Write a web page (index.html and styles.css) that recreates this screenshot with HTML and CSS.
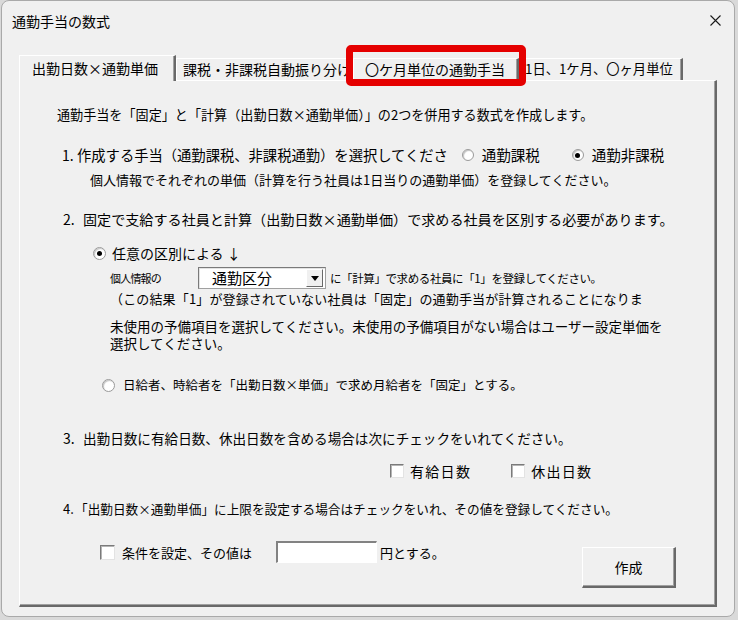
FILE: index.html
```html
<!DOCTYPE html>
<html lang="ja">
<head>
<meta charset="utf-8">
<title>通勤手当の数式</title>
<link rel="stylesheet" href="styles.css">
</head>
<body>
<div class="window">
  <div class="titlebar">
    <span class="title">通勤手当の数式</span>
    <svg class="close" width="11" height="11" viewBox="0 0 11 11"><path d="M0.5 0.5L10.5 10.5M10.5 0.5L0.5 10.5" stroke="#1a1a1a" stroke-width="1.1" fill="none"/></svg>
  </div>
  <div class="tabs-wrap">
    <div class="tabs">
      <div class="tab tab-active t1">出勤日数×通勤単価</div>
      <div class="tab t2">課税・非課税自動振り分け</div>
      <div class="tab t3">〇ケ月単位の通勤手当</div>
      <div class="tab t4">1日、1ケ月、〇ヶ月単位</div>
    </div>
    <div class="panel">
      <div class="row r1">通勤手当を「固定」と「計算（出勤日数×通勤単価）」の2つを併用する数式を作成します。</div>
      <div class="row r2">
        <span class="num n1">1.</span><span class="q1">作成する手当（通勤課税、非課税通勤）を選択してくださ</span>
        <span class="opt o1"><span class="radio"></span><span class="optlbl">通勤課税</span></span>
        <span class="opt o2"><span class="radio on"></span><span class="optlbl">通勤非課税</span></span>
      </div>
      <div class="row r3">個人情報でそれぞれの単価（計算を行う社員は1日当りの通勤単価）を登録してください。</div>
      <div class="row r4"><span class="num n2">2.</span><span class="q2">固定で支給する社員と計算（出勤日数×通勤単価）で求める社員を区別する必要があります。</span></div>
      <div class="row r5"><span class="radio big on"></span><span class="l5">任意の区別による ↓</span></div>
      <div class="row r6">
        <span class="small">個人情報の</span>
        <span class="combo"><span class="combo-text">通勤区分</span><span class="combo-btn"><span class="tri"></span></span></span>
        <span class="after">に「計算」で求める社員に「1」を登録してください。</span>
      </div>
      <div class="row r7">（この結果「1」が登録されていない社員は「固定」の通勤手当が計算されることになりま</div>
      <div class="r89">未使用の予備項目を選択してください。未使用の予備項目がない場合はユーザー設定単価を<br>選択してください。</div>
      <div class="row r10"><span class="radio big"></span><span class="l10">日給者、時給者を「出勤日数×単価」で求め月給者を「固定」とする。</span></div>
      <div class="row r11"><span class="num n3">3.</span><span class="q3">出勤日数に有給日数、休出日数を含める場合は次にチェックをいれてください。</span></div>
      <div class="row r12">
        <span class="check"></span><span class="cl">有給日数</span>
        <span class="check c2"></span><span class="cl">休出日数</span>
      </div>
      <div class="row r13"><span class="num n4">4.</span><span class="q4">「出勤日数×通勤単価」に上限を設定する場合はチェックをいれ、その値を登録してください。</span></div>
      <div class="r14">
        <div class="group">
          <span class="check c3"></span><span class="l14">条件を設定、その値は</span>
          <span class="textbox"></span>
          <span class="yen">円とする。</span>
        </div>
        <div class="button">作成</div>
      </div>
    </div>
  </div>
  <div class="highlight"></div>
</div>
</body>
</html>
```

FILE: styles.css
```css
* { box-sizing: border-box; }
body {
  margin: 0;
  background: #d9d9d9;
  font-family: "Noto Sans CJK JP", "Noto Sans", sans-serif;
  color: #000;
}
.window {
  position: relative;
  margin-left: 1px;
  width: 734px;
  height: 617px;
  background: #f0f0f0;
  border: 1px solid #a9a9a9;
  border-radius: 8px;
  overflow: hidden;
}
.titlebar {
  height: 38px;
  display: flex;
  align-items: center;
  justify-content: space-between;
  padding: 1px 13px 0 10px;
}
.title { font-size: 14px; line-height: 20px; }
.close { display: block; }

.tabs-wrap { padding: 16px 0 0 17px; }
.tabs {
  display: flex;
  align-items: flex-end;
  height: 25px;
  position: relative;
  z-index: 1;
}
.tab {
  height: 22px;
  font-size: 14px;
  line-height: 20px;
  white-space: nowrap;
  overflow: hidden;
  background: #f0f0f0;
  border-top: 1px solid #fff;
  border-left: 1px solid #fff;
  border-right: 2px solid #696969;
  box-shadow: inset -1px 0 0 #a0a0a0;
}
.tab-active {
  height: 26px;
  margin-bottom: -1px;
  padding-top: 2px;
}
.t1 { width: 157px; padding-left: 12px; }
.t2 { width: 177px; padding-left: 6px; }
.t3 { width: 166px; padding-left: 11px; }
.t4 { width: 164px; padding-left: 5px; font-size: 13.3px; }

.panel {
  width: 698px;
  height: 527px;
  border-top: 1px solid #fff;
  border-left: 1px solid #fff;
  border-right: 2px solid #696969;
  border-bottom: 2px solid #696969;
  box-shadow: inset -1px -1px 0 #a0a0a0;
}
.row {
  display: flex;
  align-items: center;
  white-space: nowrap;
  line-height: 16px;
}
.num { display: inline-block; font-size: 14px; }
.r1 { margin-top: 24px; height: 20px; padding-left: 37px; font-size: 13.1px; }
.r2 { margin-top: 20px; height: 20px; padding-left: 42px; }
.n1 { width: 15px; }
.q1 { font-size: 14.3px; }
.opt { display: flex; align-items: center; }
.o1 { margin-left: 14px; }
.o2 { margin-left: 32px; }
.optlbl { font-size: 14.5px; margin-left: 8px; }
.r3 { margin-top: 6px; height: 18px; padding-left: 70px; font-size: 13px; }
.r4 { margin-top: 20px; height: 20px; padding-left: 43px; }
.n2, .n3 { width: 20px; }
.q2 { font-size: 14.1px; }
.r5 { margin-top: 14px; height: 20px; padding-left: 73px; }
.l5 { font-size: 14px; margin-left: 6px; }
.r6 { margin-top: 4px; height: 22px; padding-left: 90px; }
.small { font-size: 11px; letter-spacing: -0.8px; width: 50px; }
.combo {
  position: relative;
  margin-left: 38px;
  width: 128px;
  height: 22px;
  background: #fff;
  border: 1px solid #a0a0a0;
  border-top-color: #7a7a7a;
  border-left-color: #7a7a7a;
  box-shadow: inset 1px 1px 0 #e3e3e3;
  display: flex;
  align-items: center;
}
.combo-text { font-size: 15px; padding-left: 13px; line-height: 20px; }
.combo-btn {
  position: absolute;
  right: 2px;
  top: 1px;
  width: 17px;
  height: 18px;
  background: #f0f0f0;
  border-top: 1px solid #fff;
  border-left: 1px solid #fff;
  border-right: 1px solid #696969;
  border-bottom: 1px solid #696969;
  display: flex;
  align-items: center;
  justify-content: center;
}
.tri {
  width: 0;
  height: 0;
  border-left: 4px solid transparent;
  border-right: 4px solid transparent;
  border-top: 5px solid #000;
}
.after { margin-left: 4px; font-size: 11.5px; letter-spacing: -0.4px; }
.r7 { margin-top: 1px; height: 18px; padding-left: 90px; font-size: 13px; letter-spacing: 0.15px; }
.r89 {
  margin-top: 10px;
  height: 33px;
  padding-left: 90px;
  font-size: 13.5px;
  line-height: 16.5px;
  white-space: nowrap;
}
.r10 { margin-top: 24px; height: 20px; padding-left: 82px; }
.l10 { font-size: 12.5px; margin-left: 8px; }
.r11 { margin-top: 33px; height: 20px; padding-left: 43px; }
.q3 { font-size: 13.6px; }
.r12 { margin-top: 13px; height: 20px; padding-left: 370px; }
.cl { font-size: 14px; letter-spacing: 1.3px; margin-left: 6px; }
.c2 { margin-left: 40px; }
.r13 { margin-top: 18px; height: 20px; padding-left: 43px; }
.n4 { width: 12px; font-size: 13px; }
.q4 { font-size: 12.65px; }
.r14 {
  margin-top: 21px;
  display: flex;
  align-items: flex-start;
  padding-left: 80px;
}
.group {
  display: flex;
  align-items: center;
  height: 24px;
  white-space: nowrap;
}
.l14 { font-size: 13px; margin-left: 7px; }
.textbox {
  margin-left: 24px;
  width: 101px;
  height: 22px;
  background: #fff;
  border-top: 2px solid #828282;
  border-left: 2px solid #828282;
  border-right: 1px solid #fff;
  border-bottom: 1px solid #fff;
}
.yen { font-size: 13px; margin-left: 3px; }
.button {
  margin-left: auto;
  margin-right: 39px;
  margin-top: 7px;
  width: 94px;
  height: 41px;
  display: flex;
  align-items: center;
  justify-content: center;
  font-size: 14px;
  background: #f0f0f0;
  border-top: 1px solid #fff;
  border-left: 1px solid #fff;
  border-right: 2px solid #696969;
  border-bottom: 2px solid #696969;
  box-shadow: inset -1px -1px 0 #a0a0a0;
}

.radio {
  position: relative;
  display: inline-block;
  flex: none;
  width: 12px;
  height: 12px;
  border-radius: 50%;
  background: #fff;
  border: 1px solid #9a9a9a;
  box-shadow: inset 1px 1px 1px #c4c4c4;
}
.radio.big { width: 13px; height: 13px; }
.radio.on::after {
  content: "";
  position: absolute;
  left: 50%;
  top: 50%;
  width: 5px;
  height: 5px;
  margin: -2.5px 0 0 -2.5px;
  border-radius: 50%;
  background: #000;
}
.check {
  display: inline-block;
  flex: none;
  width: 14px;
  height: 14px;
  background: #fff;
  border-top: 1px solid #7a7a7a;
  border-left: 1px solid #7a7a7a;
  border-right: 1px solid #e3e3e3;
  border-bottom: 1px solid #e3e3e3;
  box-shadow: inset 1px 1px 0 #b4b4b4;
}
.c3 { width: 15px; height: 15px; }

.highlight {
  position: absolute;
  left: 344px;
  top: 44px;
  width: 180px;
  height: 41px;
  border: 7px solid #e50000;
  border-radius: 5px;
  z-index: 2;
}
```
